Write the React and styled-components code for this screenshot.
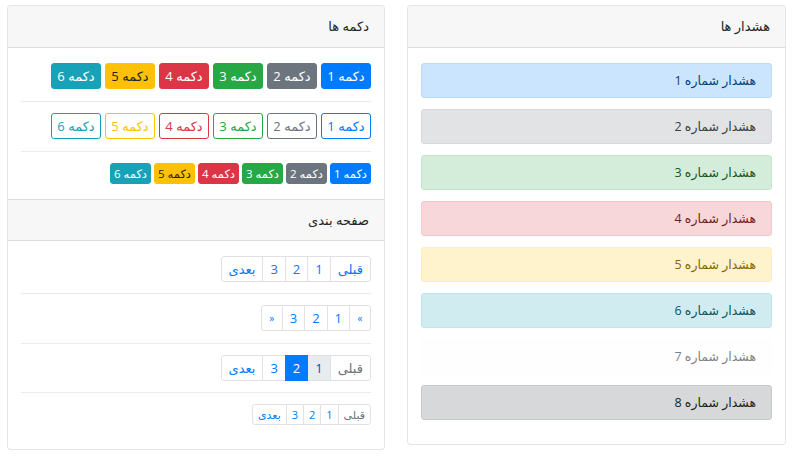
import styled, { createGlobalStyle, css } from 'styled-components'

const GlobalStyle = createGlobalStyle`
  html, body {
    margin: 0;
    padding: 0;
    background: #fff;
  }
  body {
    direction: rtl;
    font-family: "Open Sans", "DejaVu Sans", sans-serif;
    font-size: 13px;
    color: #212529;
  }
  * { box-sizing: border-box; }
`

const colors = {
  primary: '#007bff',
  secondary: '#6c757d',
  success: '#28a745',
  danger: '#dc3545',
  warning: '#ffc107',
  info: '#17a2b8',
}

const alertColors = {
  primary: ['#cce5ff', '#b8daff', '#004085'],
  secondary: ['#e2e3e5', '#d6d8db', '#383d41'],
  success: ['#d4edda', '#c3e6cb', '#155724'],
  danger: ['#f8d7da', '#f5c6cb', '#721c24'],
  warning: ['#fff3cd', '#ffeeba', '#856404'],
  info: ['#d1ecf1', '#bee5eb', '#0c5460'],
  light: ['#fefefe', '#fdfdfe', '#818182'],
  dark: ['#d6d8d9', '#c6c8ca', '#1b1e21'],
}

const Page = styled.div`
  display: grid;
  grid-template-columns: 379px 378px;
  column-gap: 22px;
  align-items: start;
  padding: 5px 14px 0 7px;
`

const Card = styled.div`
  background: #fff;
  border: 1px solid rgba(0, 0, 0, 0.1);
  border-radius: 4px;
  overflow: hidden;
`

const CardHeader = styled.div`
  height: 42px;
  padding: 0 15px;
  line-height: 41px;
  font-size: 13px;
  background: #f7f7f7;
  border-bottom: 1px solid rgba(0, 0, 0, 0.1);
  ${(p) => p.$top && css`border-top: 1px solid rgba(0, 0, 0, 0.1);`}
`

const CardBody = styled.div`
  padding: ${(p) => p.$pad || '15px 13px'};
`

const Alert = styled.div`
  height: 35px;
  margin-bottom: 11px;
  padding: 0 15px;
  line-height: 33px;
  font-size: 12.5px;
  border-radius: 3px;
  background: ${(p) => alertColors[p.$variant][0]};
  border: 1px solid ${(p) => alertColors[p.$variant][1]};
  color: ${(p) => alertColors[p.$variant][2]};
`

const Row = styled.div`
  display: flex;
  gap: ${(p) => (p.$small ? '3px' : '4px')};
`

const Divider = styled.div`
  height: 1px;
  margin: ${(p) => p.$margin || '12px 0 11px'};
  background: rgba(0, 0, 0, 0.08);
`

const Button = styled.div`
  width: ${(p) => (p.$small ? '41px' : '50px')};
  height: ${(p) => (p.$small ? '21px' : '26px')};
  line-height: ${(p) => (p.$small ? '19px' : '24px')};
  font-size: ${(p) => (p.$small ? '11.5px' : '13px')};
  text-align: center;
  white-space: nowrap;
  border-radius: 3px;
  border: 1px solid ${(p) => colors[p.$variant]};
  ${(p) =>
    p.$outline
      ? css`
          background: #fff;
          color: ${colors[p.$variant]};
        `
      : css`
          background: ${colors[p.$variant]};
          color: ${p.$variant === 'warning' ? '#212529' : '#fff'};
        `}
`

const Pagination = styled.div`
  display: flex;
  align-self: flex-start;
`

const PageLink = styled.div`
  height: ${(p) => (p.$small ? '21px' : '26px')};
  line-height: ${(p) => (p.$small ? '19px' : '24px')};
  padding: 0 ${(p) => (p.$small ? '5px' : '7px')};
  min-width: ${(p) => (p.$small ? '17px' : '22px')};
  font-size: ${(p) => (p.$small ? '11px' : '13px')};
  text-align: center;
  color: #007bff;
  background: #fff;
  border: 1px solid #dee2e6;
  margin-right: -1px;
  &:first-child {
    margin-right: 0;
    border-top-right-radius: 3px;
    border-bottom-right-radius: 3px;
  }
  &:last-child {
    border-top-left-radius: 3px;
    border-bottom-left-radius: 3px;
  }
  ${(p) => p.$quote && css`font-size: 10px;`}
  ${(p) =>
    p.$disabled &&
    css`
      color: #6c757d;
    `}
  ${(p) =>
    p.$hover &&
    css`
      color: #0056b3;
      background: #e9ecef;
    `}
  ${(p) =>
    p.$active &&
    css`
      position: relative;
      color: #fff;
      background: #007bff;
      border-color: #007bff;
    `}
`

const variants = ['primary', 'secondary', 'success', 'danger', 'warning', 'info']
const alerts = [...variants, 'light', 'dark']

function ButtonRow({ outline, small }) {
  return (
    <Row $small={small}>
      {variants.map((v, i) => (
        <Button key={v} $variant={v} $outline={outline} $small={small}>
          دکمه {i + 1}
        </Button>
      ))}
    </Row>
  )
}

function Pager({ items, small }) {
  return (
    <Pagination>
      {items.map((it, i) => (
        <PageLink
          key={i}
          $small={small}
          $disabled={it.disabled}
          $hover={it.hover}
          $active={it.active}
          $quote={it.quote}
        >
          {it.label}
        </PageLink>
      ))}
    </Pagination>
  )
}

const basic = [
  { label: 'قبلی' },
  { label: '1' },
  { label: '2' },
  { label: '3' },
  { label: 'بعدی' },
]

// rtl: first item sits at the right edge
const arrows = [
  { label: '»', quote: true },
  { label: '1' },
  { label: '2' },
  { label: '3' },
  { label: '«', quote: true },
]

const states = [
  { label: 'قبلی', disabled: true },
  { label: '1', hover: true },
  { label: '2', active: true },
  { label: '3' },
  { label: 'بعدی' },
]

const smallStates = [
  { label: 'قبلی', disabled: true },
  { label: '1' },
  { label: '2' },
  { label: '3' },
  { label: 'بعدی' },
]

export default function App() {
  return (
    <>
      <GlobalStyle />
      <Page>
        <Card>
          <CardHeader>هشدار ها</CardHeader>
          <CardBody $pad="15px 13px 13px">
            {alerts.map((v, i) => (
              <Alert key={v} $variant={v}>
                هشدار شماره {i + 1}
              </Alert>
            ))}
          </CardBody>
        </Card>

        <Card>
          <CardHeader>دکمه ها</CardHeader>
          <CardBody>
            <ButtonRow />
            <Divider />
            <ButtonRow outline />
            <Divider />
            <ButtonRow small />
          </CardBody>
          <CardHeader $top>صفحه بندی</CardHeader>
          <CardBody $pad="15px 13px 24px">
            <Pager items={basic} />
            <Divider $margin="11px 0 11px" />
            <Pager items={arrows} />
            <Divider $margin="12px 0 11px" />
            <Pager items={states} />
            <Divider $margin="11px 0 11px" />
            <Pager items={smallStates} small />
          </CardBody>
        </Card>
      </Page>
    </>
  )
}
